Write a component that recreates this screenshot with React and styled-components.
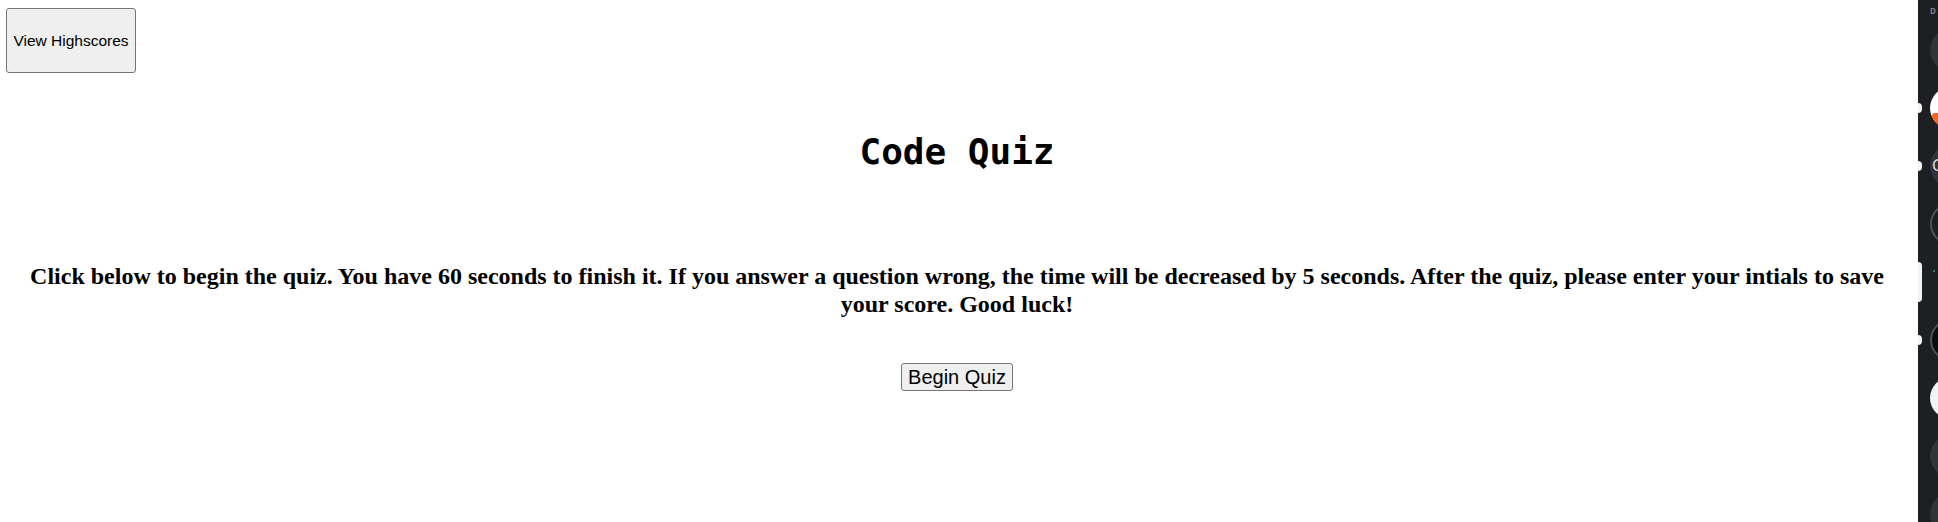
import styled, { createGlobalStyle } from "styled-components"

const GlobalStyle = createGlobalStyle`
    html, body {
        margin: 0;
        padding: 0;
        background: #fff;
    }
    #root {
        height: 522px;
    }
`

const servers = [
    { color: "#313338" },
    { color: "#fff", accent: "#f26522" },
    { color: "#313338", letter: "C" },
    { color: "#1e1f22", ring: true },
    { color: "#1e1f22", dot: true },
    { color: "#0b0c0e", ring: true },
    { color: "#f2f3f5" },
    { color: "#313338" },
    { color: "#313338" },
]

function App() {
    return (
        <Wrap>
            <GlobalStyle />
            <Main>
                <TopBar>
                    <HighscoreBtn type="button">View Highscores</HighscoreBtn>
                </TopBar>
                <Title>Code Quiz</Title>
                <Intro>
                    Click below to begin the quiz. You have 60 seconds to finish it. If you answer a question wrong, the time will be decreased by 5 seconds. After the quiz, please enter your intials to save your score. Good luck!
                </Intro>
                <StartRow>
                    <StartBtn type="button">Begin Quiz</StartBtn>
                </StartRow>
            </Main>
            <Sidebar>
                <SideTop />
                <SideLabel>D</SideLabel>
                <ServerList>
                    {servers.map((s, i) => (
                        <ServerItem key={i}>
                            {i === 1 || i === 2 || i === 5 ? <Pill /> : null}
                            {i === 4 ? <Pill $tall /> : null}
                            <ServerIcon $bg={s.color} $ring={s.ring}>
                                {s.accent ? <Accent /> : null}
                                {s.letter ? <Letter>{s.letter}</Letter> : null}
                                {s.dot ? <Dot /> : null}
                            </ServerIcon>
                        </ServerItem>
                    ))}
                </ServerList>
            </Sidebar>
        </Wrap>
    )
}

export default App

const Wrap = styled.div`
    display: flex;
    height: 522px;
    overflow: hidden;
`

const Main = styled.div`
    flex: 1;
    padding: 8px 10px 0 6px;
    font-family: "Liberation Serif", "Times New Roman", serif;
    color: #000;
`

const TopBar = styled.div`
    display: flex;
`

const HighscoreBtn = styled.button`
    width: 130px;
    height: 65px;
    padding: 0;
    background: #efefef;
    border: 1px solid #767676;
    border-radius: 3px;
    font-family: "Liberation Sans", Arial, sans-serif;
    font-size: 15.5px;
    color: #000;
`

const Title = styled.h1`
    margin: 58px 0 0;
    text-align: center;
    font-family: "DejaVu Sans Mono", "Liberation Mono", monospace;
    font-weight: bold;
    font-size: 36px;
    line-height: 42px;
`

const Intro = styled.p`
    margin: 90px 0 0;
    text-align: center;
    font-weight: bold;
    font-size: 24px;
    line-height: 27.6px;
`

const StartRow = styled.div`
    display: flex;
    justify-content: center;
    margin-top: 45px;
`

const StartBtn = styled.button`
    height: 28px;
    padding: 0 6px;
    background: #efefef;
    border: 1px solid #767676;
    border-radius: 3px;
    font-family: "Liberation Sans", Arial, sans-serif;
    font-size: 20px;
    color: #000;
`

const Sidebar = styled.div`
    flex: 0 0 20px;
    background: #1e1f22;
    display: flex;
    flex-direction: column;
    overflow: hidden;
    position: relative;
`

const SideTop = styled.div`
    height: 6px;
    background: #0a0a0b;
`

const SideLabel = styled.div`
    margin: 7px 0 0 12px;
    font-family: "Noto Sans", sans-serif;
    font-weight: bold;
    font-size: 8px;
    line-height: 8px;
    color: #80848e;
`

const ServerList = styled.div`
    display: flex;
    flex-direction: column;
    gap: 16px;
    margin-top: 14px;
`

const ServerItem = styled.div`
    position: relative;
    height: 42px;
    padding-left: 12px;
`

const Pill = styled.div`
    position: absolute;
    left: -4px;
    top: ${p => (p.$tall ? "1px" : "16px")};
    width: 8px;
    height: ${p => (p.$tall ? "40px" : "10px")};
    background: #f2f3f5;
    border-radius: 4px;
`

const ServerIcon = styled.div`
    width: 42px;
    height: 42px;
    border-radius: 50%;
    background: ${p => p.$bg};
    border: ${p => (p.$ring ? "2px solid #4e5058" : "none")};
    box-sizing: border-box;
    position: relative;
    overflow: hidden;
`

const Accent = styled.div`
    position: absolute;
    left: 2px;
    bottom: 4px;
    width: 10px;
    height: 12px;
    background: #f26522;
    border-radius: 3px;
`

const Letter = styled.span`
    position: absolute;
    left: 2px;
    top: 10px;
    font-family: "Noto Sans", sans-serif;
    font-size: 16px;
    line-height: 20px;
    color: #dbdee1;
`

const Dot = styled.div`
    position: absolute;
    left: 2px;
    top: 8px;
    width: 3px;
    height: 3px;
    border-radius: 50%;
    background: #23a55a;
`
